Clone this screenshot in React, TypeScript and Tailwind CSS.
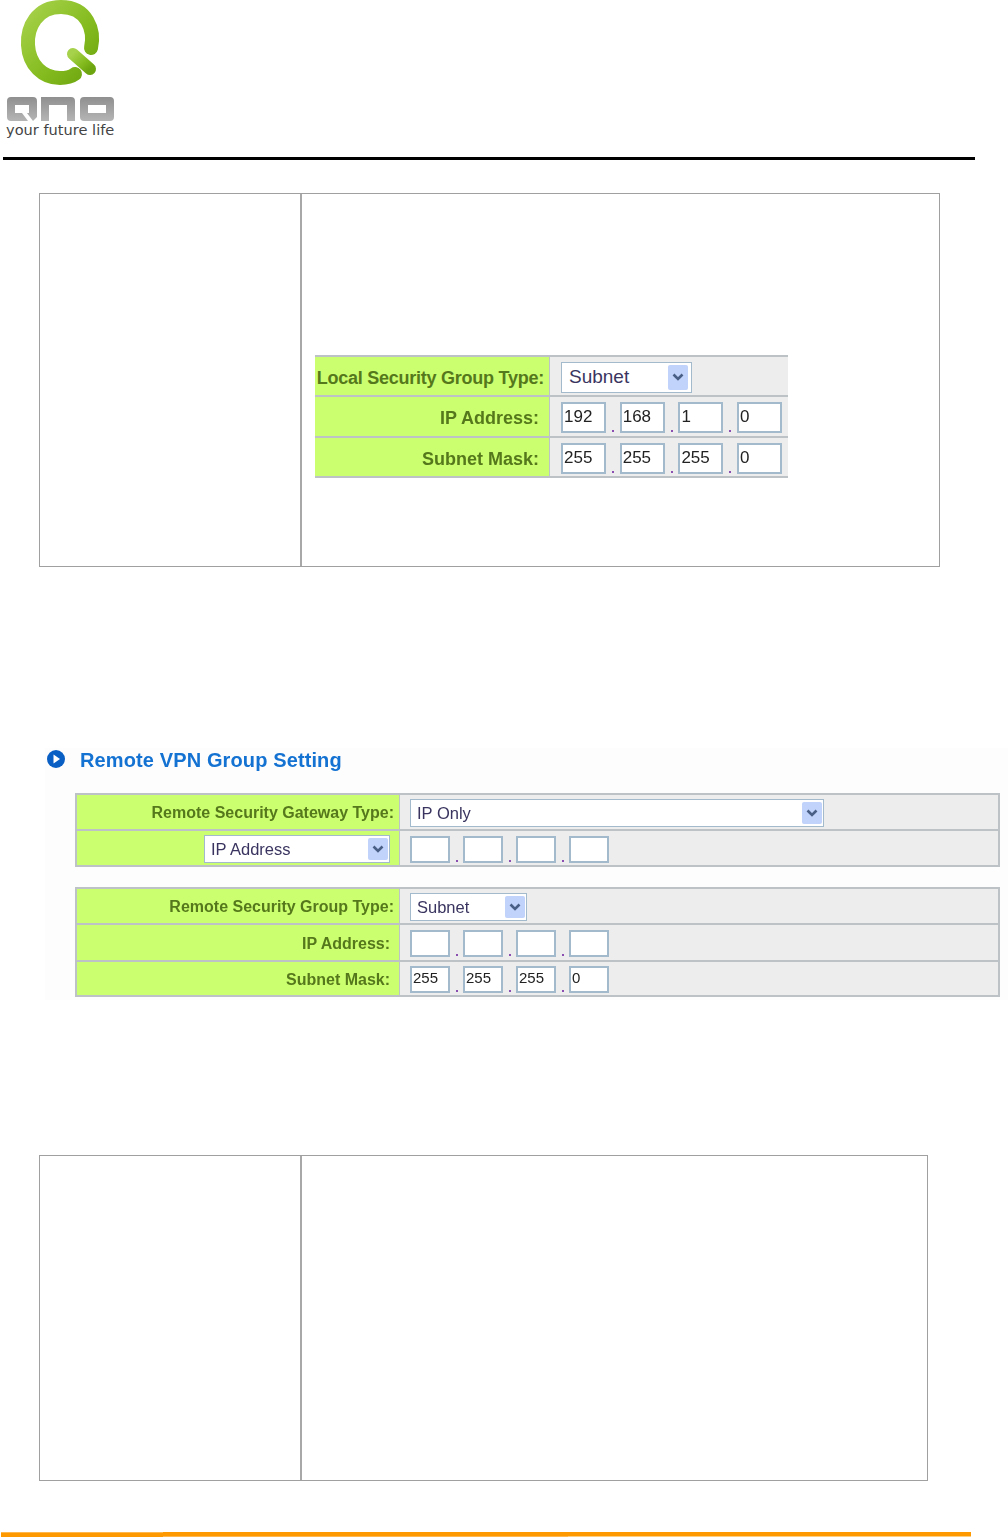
import React from "react";

const Chevron = () => (
  <svg width="12" height="8" viewBox="0 0 12 8" fill="none">
    <path d="M1.5 1.5 L6 6 L10.5 1.5" stroke="#4a5f85" strokeWidth="2.6" />
  </svg>
);

function Sel({ text, cls, big }: { text: string; cls: string; big?: boolean }) {
  return (
    <div className={`flex items-center justify-between bg-white border border-[#a3b9cc] ${big ? "text-[19px] py-[2px] pl-[7px] pr-[3px]" : "text-[16.5px] py-[2px] pl-[6px] pr-[1px]"} text-[#3a3560] ${cls}`}>
      <span className="font-normal pt-[1px]">{text}</span>
      <span className="flex items-center justify-center w-[20px] h-full bg-[#c1d3fb] rounded-[2px]">
        <Chevron />
      </span>
    </div>
  );
}

function Inputs({ vals, big }: { vals: string[]; big?: boolean }) {
  return (
    <div className={`flex items-end ${big ? "gap-[3px]" : "gap-[2px]"}`}>
      {vals.map((v, i) => (
        <React.Fragment key={i}>
          {i > 0 && (
            <span className={`flex justify-center ${big ? "w-[7.7px]" : "w-[9px]"}`}>
              <span className="w-[2px] h-[2px] mb-[1px] bg-[#8a4fb0]" />
            </span>
          )}
          <div className={`bg-white border-2 border-[#a3b9cc] text-[#222] ${big ? "w-[45px] h-[31px] text-[17px] leading-[26px] pl-[1px]" : "w-[40px] h-[27px] text-[15px] leading-[20px] pl-[1px]"}`}>
            {v}
          </div>
        </React.Fragment>
      ))}
    </div>
  );
}

function Row({ h, label, children, first, big, tight }: { h: string; label: React.ReactNode; children: React.ReactNode; first?: boolean; big?: boolean; tight?: boolean }) {
  const pad = big ? (tight ? "pr-[5px] tracking-[-0.25px]" : "pr-[10px]") : tight ? "pr-[5px]" : "pr-[9px]";
  return (
    <div className={`flex ${h} ${first ? "" : "border-t-2 border-[#bcc2c6]"}`}>
      <div className={`flex items-center justify-end whitespace-nowrap bg-[#ccff6f] border-r border-[#bcc2c6] font-bold text-[#55781c] ${pad} ${big ? "w-[235px] pt-[4px] text-[18px]" : "w-[323px] pt-[2px] text-[16px]"}`}>
        {label}
      </div>
      <div className={`flex-1 flex items-center bg-[#ededed] ${big ? "pl-[11px] pt-[2px]" : "pl-[10px] pt-[2px]"}`}>{children}</div>
    </div>
  );
}

function Logo() {
  return (
    <div className="w-[120px] h-[140px] flex flex-col ml-[5px]">
      <svg width="112" height="122" viewBox="0 0 112 122" className="shrink-0 blur-[0.5px]">
        <defs>
          <linearGradient id="g" x1="0" y1="0" x2="1" y2="1">
            <stop offset="0" stopColor="#a6d14a" />
            <stop offset="0.6" stopColor="#84bb1e" />
            <stop offset="1" stopColor="#6da510" />
          </linearGradient>
          <linearGradient id="q" x1="0" y1="0" x2="0" y2="1">
            <stop offset="0" stopColor="#8f8f8f" />
            <stop offset="1" stopColor="#b5b5b5" />
          </linearGradient>
        </defs>
        <path d="M86 48 C 90 30 82 7 56 7 C 32 7 22 27 23 45 C 24 65 38 78 55 78 C 61 78 66 77 70 74" fill="none" stroke="url(#g)" strokeWidth="14" strokeLinecap="round" />
        <path d="M68 54 L85 69" fill="none" stroke="url(#g)" strokeWidth="12" strokeLinecap="round" />
        <path fillRule="evenodd" fill="url(#q)" d="M6 97 H28 Q32 97 32 101 V117 L28 121 H6 Q2 121 2 117 V101 Q2 97 6 97 Z M10 105 V113 H24 V105 Z" />
        <path fill="#fff" d="M17 113 H22 L28 121 H23 Z" />
        <path fillRule="evenodd" fill="url(#q)" d="M36 97 H66 Q70 97 70 101 V121 H62 V105 H44 V121 H36 Z" />
        <path fillRule="evenodd" fill="url(#q)" d="M79 97 H105 Q109 97 109 101 V117 Q109 121 105 121 H79 Q75 121 75 117 V101 Q75 97 79 97 Z M83 105 V113 H101 V105 Z" />
      </svg>
      <span className="text-[14.6px] leading-[16px] mt-[0px] ml-[1px] text-[#444] whitespace-nowrap font-['DejaVu_Sans',sans-serif]">your future life</span>
    </div>
  );
}

export default function App() {
  return (
    <div className="w-[1008px] h-[1537px] bg-white flex flex-col overflow-hidden font-['Liberation_Sans',Arial,sans-serif]">
      <div className="h-[157px] shrink-0">
        <Logo />
      </div>
      <div className="h-[3px] w-[972px] ml-[3px] bg-black shrink-0" />

      <div className="mt-[33px] ml-[39px] w-[901px] h-[374px] border border-[#a0a0a0] flex shrink-0">
        <div className="w-[262px] border-r-2 border-[#a8a8a8]" />
        <div className="flex-1 pt-[161px] pl-[13px]">
          <div className="w-[473px] border-t-2 border-b-2 border-[#bcc2c6] blur-[0.3px]">
            <Row big first tight h="h-[38px]" label="Local Security Group Type:">
              <Sel big text="Subnet" cls="w-[131px] h-[31px]" />
            </Row>
            <Row big h="h-[41px]" label="IP Address:">
              <Inputs big vals={["192", "168", "1", "0"]} />
            </Row>
            <Row big h="h-[40px]" label="Subnet Mask:">
              <Inputs big vals={["255", "255", "255", "0"]} />
            </Row>
          </div>
        </div>
      </div>

      <div className="mt-[181px] ml-[45px] w-[963px] h-[252px] bg-[#fdfdfd] shrink-0 flex flex-col blur-[0.3px]">
        <div className="h-[45px] flex items-start">
          <svg width="20" height="20" viewBox="0 0 20 20" className="mt-[1px] shrink-0">
            <circle cx="11" cy="10" r="9" fill="#0a5fc4" />
            <path d="M8.5 5.5 L15 10 L8.5 14.5 Z" fill="#fff" />
          </svg>
          <span className="ml-[15px] text-[20px] leading-[24px] font-bold tracking-[0.12px] text-[#1472d2]">Remote VPN Group Setting</span>
        </div>
        <div className="ml-[30px] w-[925px] border-2 border-[#bcc2c6] shrink-0">
          <Row first tight h="h-[34px]" label="Remote Security Gateway Type:">
            <Sel text="IP Only" cls="w-[414px] h-[28px]" />
          </Row>
          <Row h="h-[36px]" label={<Sel text="IP Address" cls="w-[186px] h-[28px]" />}>
            <Inputs vals={["", "", "", ""]} />
          </Row>
        </div>
        <div className="mt-[20px] ml-[30px] w-[925px] border-2 border-[#bcc2c6] shrink-0">
          <Row first tight h="h-[34px]" label="Remote Security Group Type:">
            <Sel text="Subnet" cls="w-[117px] h-[28px]" />
          </Row>
          <Row h="h-[37px]" label="IP Address:">
            <Inputs vals={["", "", "", ""]} />
          </Row>
          <Row h="h-[35px]" label="Subnet Mask:">
            <Inputs vals={["255", "255", "255", "0"]} />
          </Row>
        </div>
      </div>

      <div className="mt-[155px] ml-[39px] w-[889px] h-[326px] border border-[#a0a0a0] flex shrink-0">
        <div className="w-[262px] border-r-2 border-[#a8a8a8]" />
      </div>

      <div className="mt-[51px] ml-[1px] w-[970px] h-[5px] flex shrink-0">
        <div className="w-[162px] bg-[#ff9900] border-t border-[#ffb84d]" />
        <div className="w-[405px] bg-[#ff9900] border-b border-[#ffb84d]" />
        <div className="flex-1 bg-[#ff9900] border-b border-[#ffcf80]" />
      </div>
    </div>
  );
}
